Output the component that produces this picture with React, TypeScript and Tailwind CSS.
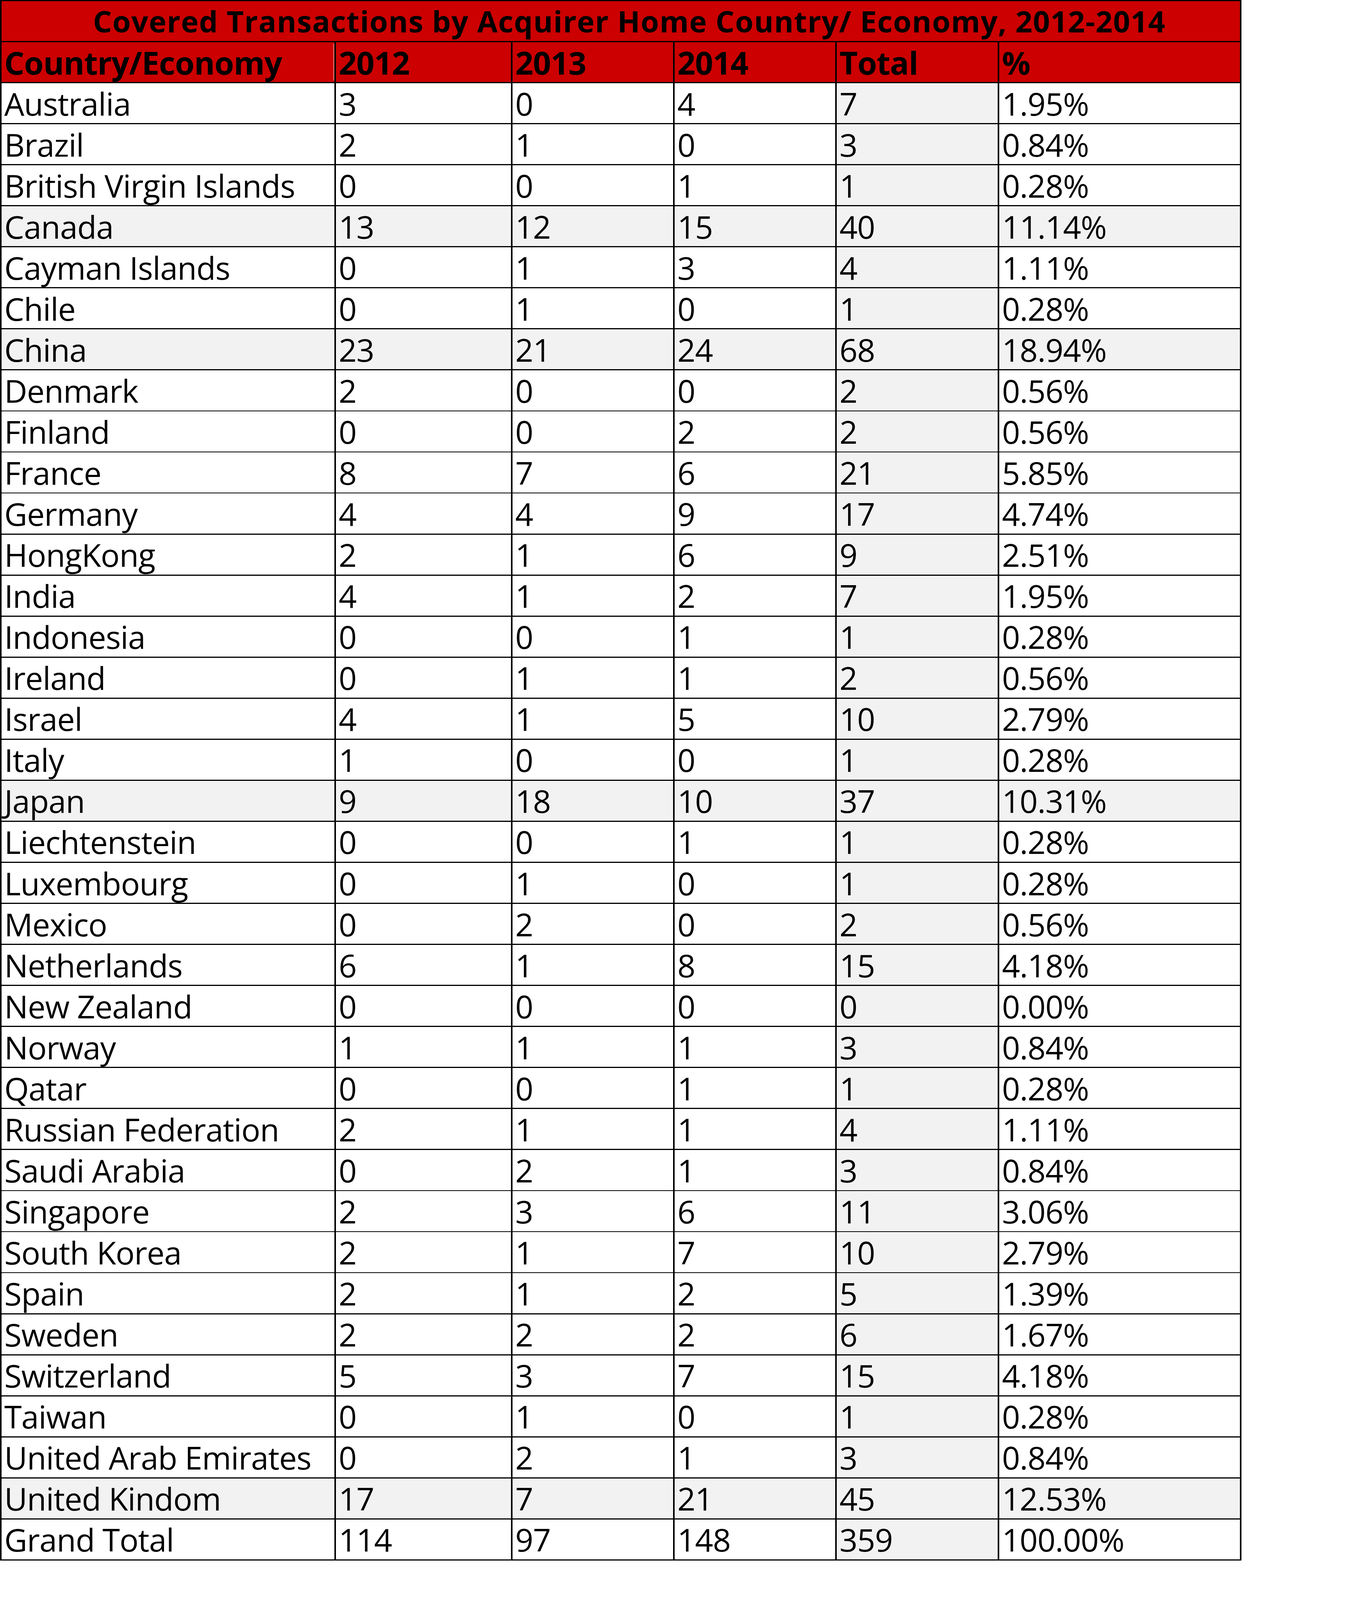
import React from "react";

type Row = [string, string, string, string, string, string, boolean];

const rows: Row[] = [
  ["Australia", "3", "0", "4", "7", "1.95%", false],
  ["Brazil", "2", "1", "0", "3", "0.84%", false],
  ["British Virgin Islands", "0", "0", "1", "1", "0.28%", false],
  ["Canada", "13", "12", "15", "40", "11.14%", true],
  ["Cayman Islands", "0", "1", "3", "4", "1.11%", false],
  ["Chile", "0", "1", "0", "1", "0.28%", false],
  ["China", "23", "21", "24", "68", "18.94%", true],
  ["Denmark", "2", "0", "0", "2", "0.56%", false],
  ["Finland", "0", "0", "2", "2", "0.56%", false],
  ["France", "8", "7", "6", "21", "5.85%", false],
  ["Germany", "4", "4", "9", "17", "4.74%", false],
  ["HongKong", "2", "1", "6", "9", "2.51%", false],
  ["India", "4", "1", "2", "7", "1.95%", false],
  ["Indonesia", "0", "0", "1", "1", "0.28%", false],
  ["Ireland", "0", "1", "1", "2", "0.56%", false],
  ["Israel", "4", "1", "5", "10", "2.79%", false],
  ["Italy", "1", "0", "0", "1", "0.28%", false],
  ["Japan", "9", "18", "10", "37", "10.31%", true],
  ["Liechtenstein", "0", "0", "1", "1", "0.28%", false],
  ["Luxembourg", "0", "1", "0", "1", "0.28%", false],
  ["Mexico", "0", "2", "0", "2", "0.56%", false],
  ["Netherlands", "6", "1", "8", "15", "4.18%", false],
  ["New Zealand", "0", "0", "0", "0", "0.00%", false],
  ["Norway", "1", "1", "1", "3", "0.84%", false],
  ["Qatar", "0", "0", "1", "1", "0.28%", false],
  ["Russian Federation", "2", "1", "1", "4", "1.11%", false],
  ["Saudi Arabia", "0", "2", "1", "3", "0.84%", false],
  ["Singapore", "2", "3", "6", "11", "3.06%", false],
  ["South Korea", "2", "1", "7", "10", "2.79%", false],
  ["Spain", "2", "1", "2", "5", "1.39%", false],
  ["Sweden", "2", "2", "2", "6", "1.67%", false],
  ["Switzerland", "5", "3", "7", "15", "4.18%", false],
  ["Taiwan", "0", "1", "0", "1", "0.28%", false],
  ["United Arab Emirates", "0", "2", "1", "3", "0.84%", false],
  ["United Kindom", "17", "7", "21", "45", "12.53%", true],
  ["Grand Total", "114", "97", "148", "359", "100.00%", false],
];

const headers = ["Country/Economy", "2012", "2013", "2014", "Total", "%"];

export default function App() {
  return (
    <div className="h-screen w-[3461px] overflow-hidden bg-white">
      <div
        className="grid h-[97.53vh] w-[3178px] grid-cols-[852px_448px_411px_411px_412px_616px] grid-rows-[repeat(38,minmax(0,1fr))] gap-x-[4px] gap-y-[0.07vh] bg-black px-[4px] py-[0.07vh] text-[81px] leading-none tracking-[-1px] text-black"
        style={{ fontFamily: '"Open Sans", "Noto Sans", sans-serif' }}
      >
        <div className="col-span-6 flex items-center justify-center bg-[#cc0000] pl-[44px] text-[76px] font-bold tracking-[1.4px] whitespace-nowrap">
          Covered Transactions by Acquirer Home Country/ Economy, 2012-2014
        </div>
        {headers.map((h, i) => (
          <div
            key={h}
            className="relative flex items-center bg-[#cc0000] pl-[7px] font-bold whitespace-nowrap"
          >
            {h}
            {i === 0 && (
              <span className="absolute right-[1px] top-[4%] bottom-[4%] w-[1px] bg-white" />
            )}
          </div>
        ))}
        {rows.map((r) => {
          const hl = r[6];
          return (
            <React.Fragment key={r[0]}>
              {r.slice(0, 6).map((c, i) => (
                <div
                  key={i}
                  className={
                    "flex items-center pl-[7px] whitespace-nowrap " +
                    (hl || i === 4 ? "bg-[#f2f2f2]" : "bg-white")
                  }
                >
                  {c as string}
                </div>
              ))}
            </React.Fragment>
          );
        })}
      </div>
    </div>
  );
}
